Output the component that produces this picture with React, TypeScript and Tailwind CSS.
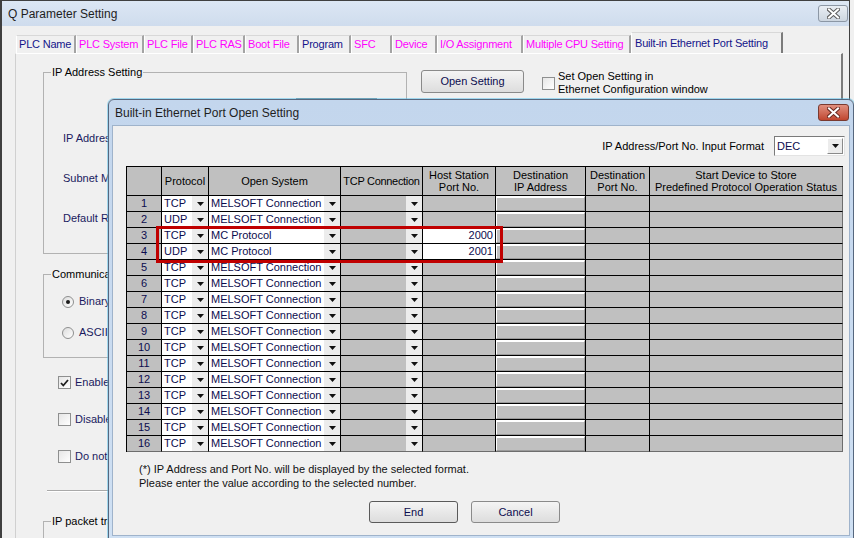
import React from "react";

const tabs = [
  { label: "PLC Name", w: "w-[60px]", c: "text-[#14148a]" },
  { label: "PLC System", w: "w-[68px]", c: "text-[#ff00ff]" },
  { label: "PLC File", w: "w-[49px]", c: "text-[#ff00ff]" },
  { label: "PLC RAS", w: "w-[52px]", c: "text-[#ff00ff]" },
  { label: "Boot File", w: "w-[54px]", c: "text-[#ff00ff]" },
  { label: "Program", w: "w-[52px]", c: "text-[#14148a]" },
  { label: "SFC", w: "w-[41px]", c: "text-[#ff00ff]" },
  { label: "Device", w: "w-[45px]", c: "text-[#ff00ff]" },
  { label: "I/O Assignment", w: "w-[86px]", c: "text-[#ff00ff]" },
  { label: "Multiple CPU Setting", w: "w-[108px]", c: "text-[#ff00ff]" },
];

const headers = [
  "",
  "Protocol",
  "Open System",
  "TCP Connection",
  "Host Station\nPort No.",
  "Destination\nIP Address",
  "Destination\nPort No.",
  "Start Device to Store\nPredefined Protocol Operation Status",
];

const rows: { proto: string; open: string; port?: string }[] = [
  { proto: "TCP", open: "MELSOFT Connection" },
  { proto: "UDP", open: "MELSOFT Connection" },
  { proto: "TCP", open: "MC Protocol", port: "2000" },
  { proto: "UDP", open: "MC Protocol", port: "2001" },
  ...Array.from({ length: 12 }, () => ({ proto: "TCP", open: "MELSOFT Connection" })),
];

const cols = "grid grid-cols-[35px_47px_132px_82px_73px_90px_64px_193px]";

const Tri = () => (
  <svg width="7" height="4" viewBox="0 0 7 4">
    <path d="M0 0h7L3.5 4z" fill="#111" />
  </svg>
);

const CloseX = ({ light }: { light?: boolean }) => (
  <svg width="13" height="11" viewBox="0 0 13 11">
    <path d="M2 1.5l9 8M11 1.5l-9 8" stroke={light ? "#6a2a22" : "#5b5b5b"} strokeWidth="4" strokeLinecap="square" />
    <path d="M2 1.5l9 8M11 1.5l-9 8" stroke="#fff" strokeWidth="2" strokeLinecap="square" />
  </svg>
);

const DropCell = ({ text, white }: { text?: string; white?: boolean }) => (
  <div className={`flex h-full items-stretch ${white ? "bg-white" : "bg-[#c0c0c0]"}`}>
    <span className="flex-1 truncate pl-[2px] leading-[15px] text-[#0c0c4e]">{text}</span>
    <span className="flex w-[16px] items-center justify-center bg-[#ececec]">
      <Tri />
    </span>
  </div>
);

const CheckBox = ({ checked }: { checked?: boolean }) => (
  <span className="flex h-[13px] w-[13px] shrink-0 items-center justify-center border border-[#8e8f8f] bg-linear-to-br from-[#e6e6e6] to-white">
    {checked && (
      <svg width="9" height="8" viewBox="0 0 9 8">
        <path d="M1 4l2.3 2.5L8 1" stroke="#1e1e1e" strokeWidth="1.8" fill="none" />
      </svg>
    )}
  </span>
);

const Radio = ({ checked }: { checked?: boolean }) => (
  <span className="flex h-[12px] w-[12px] shrink-0 items-center justify-center rounded-full border border-[#8e8f8f] bg-linear-to-br from-[#dcdcdc] to-white">
    {checked && <span className="h-[4px] w-[4px] rounded-full bg-[#1b1b1b]" />}
  </span>
);

const WinButton = ({ label, strong, wide }: { label: string; strong?: boolean; wide?: boolean }) => (
  <button
    className={`flex items-center justify-center rounded-[3px] border bg-linear-to-b from-[#f4f4f4] to-[#dddddd] text-[#0c0c4e] ${
      wide ? "h-[23px] w-[103px]" : "h-[22px] w-[89px]"
    } ${strong ? "border-[#5a5a5a]" : "border-[#8a8a8a]"}`}
  >
    {label}
  </button>
);

export default function App() {
  return (
    <div className="relative h-[538px] w-[854px] overflow-hidden bg-[#f0f0f0] font-['Liberation_Sans',Arial,sans-serif] text-[11px] text-black">
      {/* Q Parameter Setting window (behind) */}
      <div className="flex h-full w-[850px] flex-col border-l-2 border-r border-t border-[#404040]">
        <div className="flex h-[25px] shrink-0 items-center bg-linear-to-b from-[#dce7f4] to-[#cfdced] pl-[6px] text-[12px] text-[#1e1e1e]">
          <span>Q Parameter Setting</span>
          <span className="ml-auto mr-[1px] flex h-[17px] w-[30px] items-center justify-center rounded-[3px] border border-[#8c97a5] bg-linear-to-b from-[#e9eef4] to-[#cdd6e0]">
            <CloseX />
          </span>
        </div>

        {/* tabs */}
        <div className="flex h-[27px] shrink-0 items-end pl-[14px] tracking-[-0.2px]">
          {tabs.map((t) => (
            <div
              key={t.label}
              className={`flex h-[18px] items-center overflow-hidden whitespace-nowrap border-l border-t border-l-white border-t-[#d8d8d8] border-r-2 border-r-[#a3a3a3] pl-[2px] ${t.w} ${t.c}`}
            >
              {t.label}
            </div>
          ))}
          <div className="flex h-[21px] w-[152px] items-center whitespace-nowrap border-l border-t border-l-white border-t-[#d8d8d8] border-r-2 border-r-[#7b7b7b] pl-[3px] text-[#14148a]">
            Built-in Ethernet Port Setting
          </div>
        </div>

        {/* tab panel */}
        <div className="ml-[13px] mr-[6px] flex flex-1 border-l border-t border-l-[#d0d0d0] border-t-white border-r-2 border-r-[#7b7b7b] pl-[27px] pt-[12px]">
          <div className="flex w-[364px] shrink-0 flex-col">
            <fieldset className="h-[188px] border border-[#b2b2b2]">
              <legend className="ml-[7px] px-[1px] leading-[13px]">IP Address Setting</legend>
              <div className="ml-[252px] mt-[19px] flex h-[20px] w-[81px] border border-[#8a8a8a] bg-white">
                <span className="ml-auto w-[15px] border-l border-[#8a8a8a] bg-[#ececec]" />
              </div>
              <div className="ml-[19px] mt-[14px] flex w-[45px] flex-col gap-[27px] overflow-hidden whitespace-nowrap leading-[13px] text-[#1a1a5e]">
                <span>IP Address</span>
                <span>Subnet Mask Pattern</span>
                <span>Default Router IP Address</span>
              </div>
            </fieldset>

            <fieldset className="mt-[14px] h-[90px] border border-[#b2b2b2]">
              <legend className="ml-[7px] w-[58px] overflow-hidden whitespace-nowrap px-[1px] leading-[13px]">
                Communication Data Code
              </legend>
              <div className="ml-[18px] mt-[14px] flex w-[46px] flex-col gap-[18px] overflow-hidden whitespace-nowrap leading-[13px] text-[#1a1a5e]">
                <label className="flex items-center gap-[5px]">
                  <Radio checked />
                  Binary Code
                </label>
                <label className="flex items-center gap-[5px]">
                  <Radio />
                  ASCII Code
                </label>
              </div>
            </fieldset>

            <div className="ml-[15px] mt-[18px] flex w-[50px] flex-col gap-[24px] overflow-hidden whitespace-nowrap leading-[13px] text-[#1a1a5e]">
              <label className="flex items-center gap-[4px]">
                <CheckBox checked />
                Enable online change (FTP, MC Protocol)
              </label>
              <label className="flex items-center gap-[4px]">
                <CheckBox />
                Disable direct connection to MELSOFT
              </label>
              <label className="flex items-center gap-[4px]">
                <CheckBox />
                Do not respond to search for CPU on network
              </label>
            </div>

            <div className="ml-[4px] mt-[27px] h-[2px] w-[340px] border-b border-t border-b-white border-t-[#a9a9a9]" />

            <fieldset className="mt-[23px] h-[40px] border border-[#b2b2b2]">
              <legend className="ml-[7px] w-[58px] overflow-hidden whitespace-nowrap px-[1px] leading-[13px]">
                IP packet transfer setting
              </legend>
            </fieldset>
          </div>

          <div className="ml-[14px] mt-[4px] flex items-start">
            <WinButton label="Open Setting" wide />
          </div>
          <div className="ml-[18px] mt-[5px] flex items-start gap-[3px] leading-[13px]">
            <span className="mt-[6px]">
              <CheckBox />
            </span>
            <span className="mt-[-1px]">
              Set Open Setting in
              <br />
              Ethernet Configuration window
            </span>
          </div>
        </div>
      </div>

      {/* Built-in Ethernet Port Open Setting dialog */}
      <div className="absolute left-[108px] top-[99px] flex h-[441px] w-[746px] flex-col rounded-t-[6px] border border-[#56677e] bg-linear-to-b from-[#c3d6ed] to-[#cfe0f3] px-[3px] pb-[3px] shadow-[0_0_0_1px_rgba(80,190,235,0.5)]">
        <div className="flex h-[25px] shrink-0 items-center pl-[3px] text-[12px] text-[#1e1e1e]">
          <span>Built-in Ethernet Port Open Setting</span>
          <span className="ml-auto mr-[1px] flex h-[17px] w-[31px] items-center justify-center rounded-[3px] border border-[#7a3a30] bg-linear-to-b from-[#e08f7f] to-[#c0452f]">
            <CloseX light />
          </span>
        </div>

        <div className="flex flex-1 flex-col border border-[#9fb3cb] bg-[#f0f0f0] pl-[13px] pr-[5px] pt-[10px]">
          <div className="flex items-center justify-end gap-[10px]">
            <span>IP Address/Port No. Input Format</span>
            <div className="-mr-[1px] flex h-[20px] w-[71px] border border-b-[#e3e3e3] border-l-[#7a7a7a] border-r-[#e3e3e3] border-t-[#7a7a7a] bg-white">
              <span className="flex-1 pl-[2px] leading-[18px] text-[#0c0c4e]">DEC</span>
              <span className="my-[1px] mr-[1px] flex w-[16px] items-center justify-center border border-b-[#8a8a8a] border-l-white border-r-[#8a8a8a] border-t-white bg-[#ececec]">
                <Tri />
              </span>
            </div>
          </div>

          {/* table */}
          <div className="mt-[10px] w-[717px] border-l border-t border-black">
            <div className={`${cols} h-[29px]`}>
              {headers.map((h, i) => (
                <div
                  key={i}
                  className={`flex items-center justify-center whitespace-pre-line border-b border-r border-black bg-[#c0c0c0] text-center leading-[12px] ${
                    i === 3 ? "tracking-[-0.3px]" : ""
                  } ${i === 7 ? "border-r-[#6d6d6d]" : ""}`}
                >
                  {h}
                </div>
              ))}
            </div>
            {rows.map((r, i) => {
              const last = i === 15 ? "border-b-[#6d6d6d]" : "";
              return (
                <div key={i} className={`${cols} h-[16px]`}>
                  <div className={`border-b border-r border-black bg-[#c0c0c0] text-center leading-[15px] text-[#0c0c4e] ${last}`}>
                    {i + 1}
                  </div>
                  <div className={`border-b border-r border-black ${last}`}>
                    <DropCell text={r.proto} white />
                  </div>
                  <div className={`border-b border-r border-black ${last}`}>
                    <DropCell text={r.open} white />
                  </div>
                  <div className={`border-b border-r border-black ${last}`}>
                    <DropCell />
                  </div>
                  <div
                    className={`border-b border-r border-black pr-[2px] text-right leading-[15px] text-[#0c0c4e] ${
                      r.port ? "bg-white" : "bg-[#c0c0c0]"
                    } ${last}`}
                  >
                    {r.port}
                  </div>
                  <div className={`border-b border-r border-black bg-[#c0c0c0] ${last}`}>
                    <div className="h-full border-b border-l border-r border-t-2 border-b-[#9a9a9a] border-l-white border-r-[#9a9a9a] border-t-white" />
                  </div>
                  <div className={`border-b border-r border-black bg-[#c0c0c0] ${last}`} />
                  <div className={`border-b border-r border-black border-r-[#6d6d6d] bg-[#c0c0c0] ${last}`} />
                </div>
              );
            })}
          </div>

          <p className="ml-[13px] mt-[10px] leading-[14px] text-[#111]">
            (*) IP Address and Port No. will be displayed by the selected format.
            <br />
            Please enter the value according to the selected number.
          </p>

          <div className="ml-[243px] mt-[11px] flex gap-[13px]">
            <WinButton label="End" strong />
            <WinButton label="Cancel" />
          </div>
        </div>

        {/* highlight */}
        <div className="absolute left-[47px] top-[126px] h-[37px] w-[347px] border-[3px] border-[#c00000]" />
      </div>
    </div>
  );
}
